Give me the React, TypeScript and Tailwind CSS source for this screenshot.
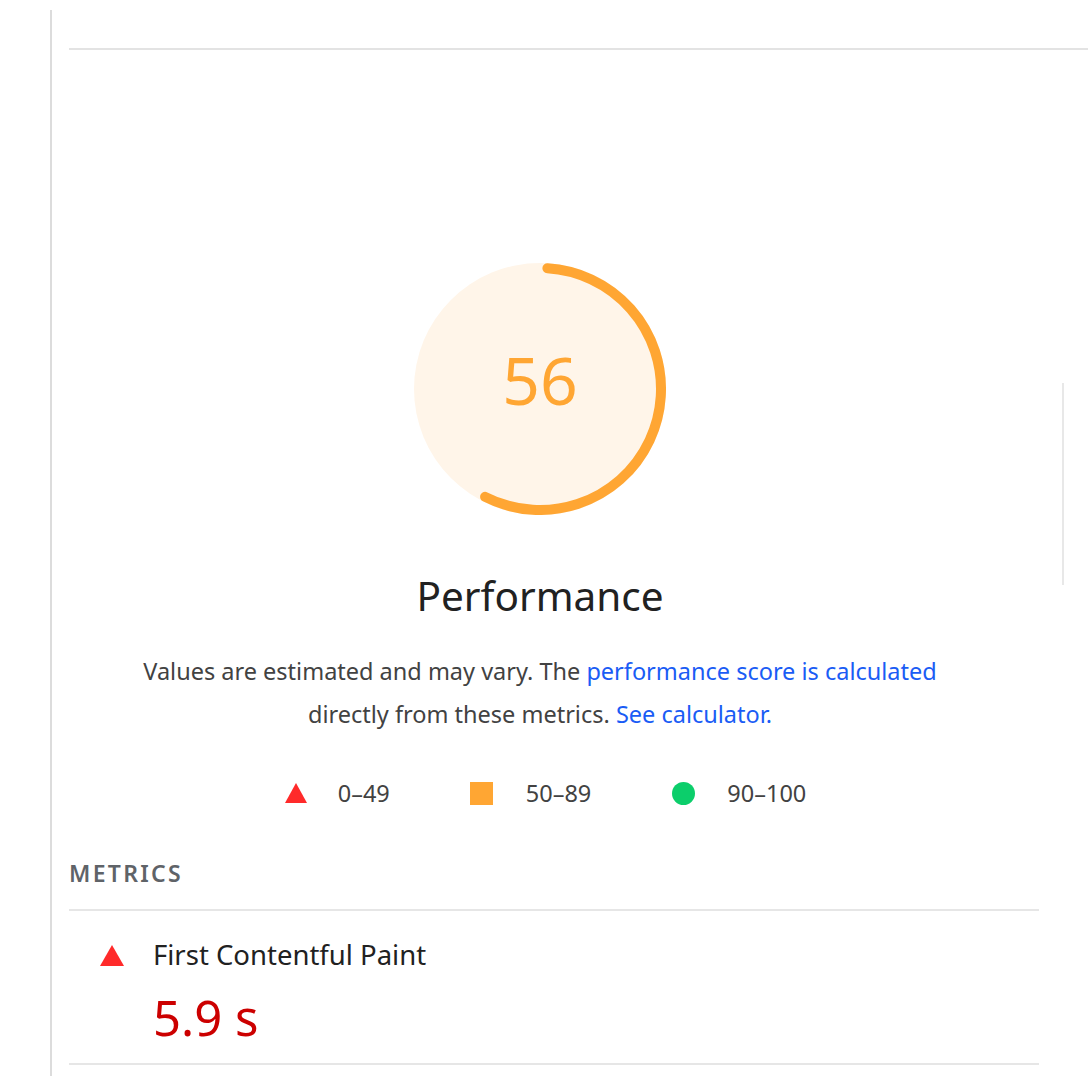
export default function App() {
  const r = 121;
  const circ = 2 * Math.PI * r;
  const arc = 0.565;

  return (
    <div className="relative flex h-[1087px] w-[1088px] overflow-hidden bg-white pt-[10px] font-['Noto_Sans',sans-serif]">
      <div className="w-[50px] shrink-0" />
      <div className="h-[1066px] w-[2px] shrink-0 bg-[#dcdcdc]" />
      <div className="flex flex-1 flex-col pl-[17px]">
        <div className="h-[38px]" />
        <div className="h-[2px] bg-[#e3e3e3]" />

        <div className="flex w-[942px] flex-col items-center pt-[213px]">
          <svg width="252" height="252" viewBox="0 0 252 252">
            <circle cx="126" cy="126" r="126" fill="#fff5e9" />
            <circle
              cx="126"
              cy="126"
              r={r}
              fill="none"
              stroke="#ffa633"
              strokeWidth="10"
              strokeLinecap="round"
              strokeDasharray={`${circ * arc} ${circ}`}
              transform="rotate(-86.5 126 126)"
            />
            <text
              x="126"
              y="124"
              textAnchor="middle"
              dominantBaseline="middle"
              fill="#ffa633"
              fontSize="66"
              fontFamily="Noto Sans, sans-serif"
            >
              56
            </text>
          </svg>

          <h1 className="mt-[57px] text-[40.5px] leading-[48px] text-[#212121]">Performance</h1>

          <p className="mt-[30px] text-center text-[23.5px] leading-[43px] text-[#424242]">
            Values are estimated and may vary. The{" "}
            <span className="text-[#1a5cf5]">performance score is calculated</span>
            <br />
            directly from these metrics.{" "}
            <span className="text-[#1a5cf5]">See calculator.</span>
          </p>

          <div className="mt-[42px] flex items-center pl-[10px] text-[23.5px] leading-[30px] text-[#424242]">
            <div className="flex items-center">
              <svg width="24" height="22" viewBox="0 0 24 22">
                <polygon points="12,1 23,21 1,21" fill="#ff2a2a" />
              </svg>
              <span className="ml-[30px]">0–49</span>
            </div>
            <div className="ml-[80px] flex items-center">
              <div className="h-[23px] w-[23px] bg-[#ffa633]" />
              <span className="ml-[33px]">50–89</span>
            </div>
            <div className="ml-[81px] flex items-center">
              <div className="h-[23px] w-[23px] rounded-full bg-[#0cce6b]" />
              <span className="ml-[32px]">90–100</span>
            </div>
          </div>
        </div>

        <div className="w-[970px]">
          <div className="mt-[50px] text-[23px] font-semibold leading-[30px] tracking-[2.3px] text-[#5f6368]">
            METRICS
          </div>
          <div className="mt-[21px] h-[2px] bg-[#e6e6e6]" />
          <div className="flex flex-col pl-[30px] pt-[29px]">
            <div className="flex items-center">
              <svg width="26" height="23" viewBox="0 0 26 23">
                <polygon points="13,1 25,22 1,22" fill="#ff2a2a" />
              </svg>
              <span className="ml-[28px] text-[27.5px] leading-[30px] text-[#212121]">
                First Contentful Paint
              </span>
            </div>
            <div className="ml-[54px] mt-[19px] text-[49px] leading-[56px] text-[#c00]">5.9 s</div>
          </div>
          <div className="mt-[18px] h-[2px] bg-[#e6e6e6]" />
        </div>
      </div>

      <div className="absolute left-[1062px] top-[383px] h-[202px] w-[2px] bg-[#e8e8e8]" />
    </div>
  );
}
